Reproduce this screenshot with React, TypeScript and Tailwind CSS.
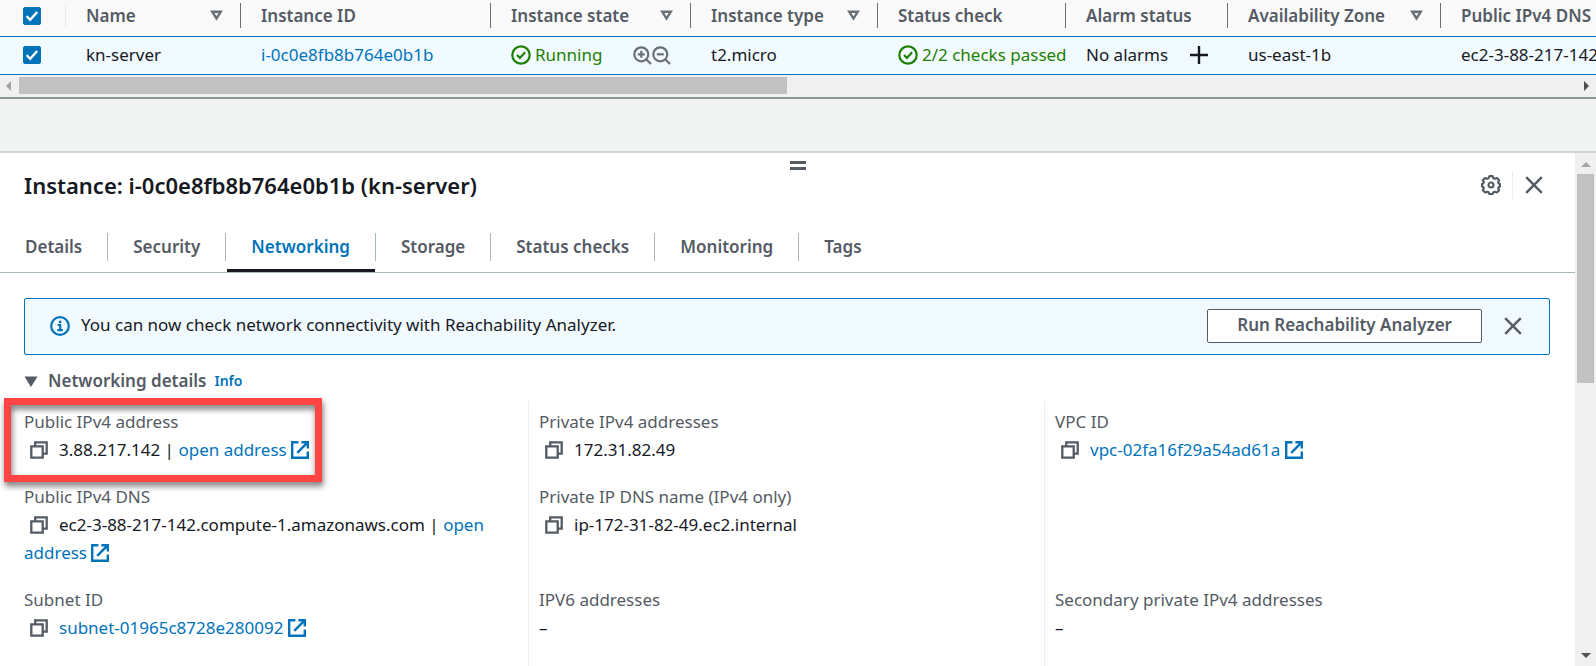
import type { ReactNode } from "react";

function CheckCircle() {
  return (
    <svg viewBox="0 0 20 20" className="size-5 shrink-0" fill="none" stroke="currentColor" strokeWidth="2.2">
      <circle cx="10" cy="10" r="8.7" />
      <path d="M6 10 8.900 12.900 14.100 7.300" />
    </svg>
  );
}

function ZoomGlyph({ plus }: { plus?: boolean }) {
  return (
    <svg viewBox="0 0 19 19" className="size-[19px]" fill="none" stroke="currentColor" strokeWidth="2.2">
      <circle cx="8.300" cy="8.300" r="7" />
      <path d="M13.200 13.200 18 18" />
      <path d={plus ? "M4.800 8.300h7M8.300 4.800v7" : "M4.800 8.300h7"} />
    </svg>
  );
}

function SortIcon() {
  return (
    <svg viewBox="0 0 13 11" className="h-[11px] w-[13px]" fill="none" stroke="currentColor" strokeWidth="2.4">
      <path d="M2.200 1.700h8.600L6.500 8.600z" />
    </svg>
  );
}

function CopyIcon() {
  return (
    <svg viewBox="0 0 18 18" className="size-[18px]" fill="none" stroke="currentColor" strokeWidth="2.3">
      <path d="M1.300 5.300h11.400v11.400H1.300z" />
      <path d="M5.200 5V1.300h11.500v11.400H13" />
    </svg>
  );
}

function ExternalIcon() {
  return (
    <svg viewBox="0 0 18 18" className="inline-block size-[18px] align-[-3px]" fill="none" stroke="currentColor" strokeWidth="2.4">
      <path d="M7.400 1.200H1.200v15.600h15.600v-6.200" />
      <path d="M10.400 1.200h6.400v6.400M16.400 1.600 6.200 11.800" />
    </svg>
  );
}

function CloseIcon() {
  return (
    <svg viewBox="0 0 18 18" className="size-[18px]" fill="none" stroke="currentColor" strokeWidth="2.4">
      <path d="M1.200 1.200 16.800 16.800M16.800 1.200 1.200 16.800" />
    </svg>
  );
}

function GearIcon() {
  return (
    <svg viewBox="0 0 20 20" className="size-5" fill="none" stroke="currentColor" strokeWidth="2.200" strokeLinejoin="round">
      <circle cx="10" cy="10" r="2.500" />
      <path d="M8.400 1.200h3.200l.8 2 1.500.6 2-.8 2.200 2.200-.9 2 .6 1.400 1.200.5v2.300l-1.200.5-.6 1.400.9 2-2.200 2.200-2-.8-1.500.6-.8 1.700H8.400l-.8-1.700-1.500-.6-2 .8L1.900 15.300l.9-2-.6-1.400L1 11.400V9.100l1.200-.5.6-1.400-.9-2L4.100 3l2 .8 1.500-.6z" />
    </svg>
  );
}

function Tick({ label }: { label: string }) {
  return (
    <label className="ml-[23px] grid size-[18px] place-items-center text-white">
      <input
        type="checkbox"
        defaultChecked
        aria-label={label}
        className="peer col-start-1 row-start-1 size-[18px] appearance-none rounded-xs border border-[#879596] bg-white checked:border-[#0073bb] checked:bg-[#0073bb]"
      />
      <svg viewBox="0 0 18 18" className="pointer-events-none col-start-1 row-start-1 hidden size-[18px] peer-checked:block" fill="none" stroke="currentColor" strokeWidth="2.4">
        <path d="M3.600 9.200 7.200 12.800 14.200 5" />
      </svg>
    </label>
  );
}

const columns = [
  { title: "Name", sort: true, width: "w-[175px]" },
  { title: "Instance ID", sort: false, width: "w-[250px]" },
  { title: "Instance state", sort: true, width: "w-[200px]" },
  { title: "Instance type", sort: true, width: "w-[187px]" },
  { title: "Status check", sort: false, width: "w-[188px]" },
  { title: "Alarm status", sort: false, width: "w-[162px]" },
  { title: "Availability Zone", sort: true, width: "w-[213px]" },
  { title: "Public IPv4 DNS", sort: false, width: "" },
];

function InstanceTable() {
  return (
    <table className="w-full table-fixed border-collapse whitespace-nowrap">
      <thead>
        <tr className="h-[36px] border-b border-[#0073bb] bg-[#fafafa] align-top text-[#545b64]">
          <th className="w-[66px] p-0 pt-[3px]">
            <div className="flex h-[25px] items-center border-r border-[#eaeded]">
              <Tick label="Select all instances" />
            </div>
          </th>
          {columns.map((c, i) => (
            <th key={c.title} scope="col" className={`p-0 pt-[3px] text-left font-semibold ${c.width}`}>
              <div className={`flex h-[25px] items-center justify-between pr-[17px] pl-5 ${i < columns.length - 1 ? "border-r border-[#687078]" : ""}`}>
                {c.title}
                {c.sort && (
                  <button type="button" aria-label={`Sort by ${c.title}`} className="text-[#687078]">
                    <SortIcon />
                  </button>
                )}
              </div>
            </th>
          ))}
        </tr>
      </thead>
      <tbody>
        <tr className="h-[38px] border-b border-[#0073bb] bg-[#f1faff]">
          <td className="p-0">
            <Tick label="Select kn-server" />
          </td>
          <td className="p-0 pl-5">kn-server</td>
          <td className="p-0 pl-5">
            <a href="#instance" className="text-[#0073bb]">i-0c0e8fb8b764e0b1b</a>
          </td>
          <td className="p-0 pr-5 pl-5">
            <div className="flex items-center justify-between">
              <span className="flex items-center gap-1 text-[#1d8102]">
                <CheckCircle />
                Running
              </span>
              <span className="flex items-center text-[#687078]">
                <button type="button" aria-label="Filter by this state"><ZoomGlyph plus /></button>
                <button type="button" aria-label="Exclude this state"><ZoomGlyph /></button>
              </span>
            </div>
          </td>
          <td className="p-0 pl-5">t2.micro</td>
          <td className="overflow-hidden p-0 pl-5">
            <span className="flex items-center gap-1 text-[#1d8102]">
              <CheckCircle />
              2/2 checks passed
            </span>
          </td>
          <td className="p-0 pr-5 pl-5">
            <div className="flex items-center justify-between">
              No alarms
              <button type="button" aria-label="Add alarm">
                <svg viewBox="0 0 18 18" className="size-[18px]" fill="none" stroke="currentColor" strokeWidth="2.4">
                  <path d="M0 9h18M9 0v18" />
                </svg>
              </button>
            </div>
          </td>
          <td className="p-0 pl-5">us-east-1b</td>
          <td className="overflow-hidden p-0 pl-5">ec2-3-88-217-142.compute-1.amazonaws.com</td>
        </tr>
      </tbody>
    </table>
  );
}

function HorizontalScrollbar() {
  return (
    <div className="flex h-[24px] shrink-0 items-center border-b-2 border-[#879596] bg-[#f0f0f0]">
      <svg viewBox="0 0 19 10" className="h-[10px] w-[19px] text-[#a3a3a3]" fill="currentColor">
        <path d="M11 0v10L6 5z" />
      </svg>
      <div className="flex flex-1">
        <div className="h-[17px] w-[49.3%] bg-[#c1c1c1]" />
      </div>
      <svg viewBox="0 0 19 10" className="h-[10px] w-[19px] text-[#505050]" fill="currentColor">
        <path d="M7 0v10l5-5z" />
      </svg>
    </div>
  );
}

const tabs = ["Details", "Security", "Networking", "Storage", "Status checks", "Monitoring", "Tags"];

function Tabs() {
  return (
    <div role="tablist" className="flex h-[48px] border-b border-[#aab7b8] font-semibold text-[#545b64]">
      {tabs.map((t, i) => (
        <div key={t} className="relative">
          <button
            type="button"
            role="tab"
            aria-selected={t === "Networking"}
            className={`mt-2 flex h-7 items-center px-[25px] ${i < tabs.length - 1 ? "border-r border-[#aab7b8]" : ""} ${t === "Networking" ? "text-[#0073bb]" : ""}`}
          >
            {t}
          </button>
          {t === "Networking" && <div className="absolute right-px bottom-0 left-px h-[3px] bg-[#16191f]" />}
        </div>
      ))}
    </div>
  );
}

function Field({ label, copy, children }: { label: string; copy?: boolean; children: ReactNode }) {
  return (
    <div className="leading-7">
      <dt className="text-[#545b64]">{label}</dt>
      <dd>
        {copy && (
          <button type="button" aria-label={`Copy ${label}`} className="mr-[11px] ml-[6px] align-[-3px] text-[#545b64]">
            <CopyIcon />
          </button>
        )}
        {children}
      </dd>
    </div>
  );
}

function Ext({ children }: { children: ReactNode }) {
  return (
    <a href="#open" className="text-[#0073bb]">
      {children} <ExternalIcon />
    </a>
  );
}

function NetworkingDetails() {
  return (
    <dl className="grid grid-cols-3 pr-[15px] pl-3">
      <div className="relative row-span-4 grid grid-rows-subgrid gap-y-[19px] pt-[7px] pr-5 pl-3">
        <Field label="Public IPv4 address" copy>
          3.88.217.142 | <Ext>open address</Ext>
        </Field>
        <Field label="Public IPv4 DNS" copy>
          ec2-3-88-217-142.compute-1.amazonaws.com | <Ext>open address</Ext>
        </Field>
        <Field label="Subnet ID" copy>
          <Ext>subnet-01965c8728e280092</Ext>
        </Field>
        <div className="h-10" />
        <div className="pointer-events-none absolute -top-[3px] -left-2 h-[84px] w-[318px] border-[7px] border-[#ff4444] drop-shadow-[1px_4px_3px_rgba(0,0,0,0.55)]" />
      </div>
      <div className="row-span-4 grid grid-rows-subgrid gap-y-[19px] border-l border-[#eaeded] pt-[7px] pr-5 pl-[10px]">
        <Field label="Private IPv4 addresses" copy>172.31.82.49</Field>
        <Field label="Private IP DNS name (IPv4 only)" copy>ip-172-31-82-49.ec2.internal</Field>
        <Field label="IPV6 addresses">–</Field>
      </div>
      <div className="row-span-4 grid grid-rows-subgrid gap-y-[19px] border-l border-[#eaeded] pt-[7px] pr-5 pl-[10px]">
        <Field label="VPC ID" copy>
          <Ext>vpc-02fa16f29a54ad61a</Ext>
        </Field>
        <div />
        <Field label="Secondary private IPv4 addresses">–</Field>
      </div>
    </dl>
  );
}

function VerticalScrollbar() {
  return (
    <div className="flex w-[21px] shrink-0 flex-col items-center bg-[#f0f0f0]">
      <svg viewBox="0 0 10 21" className="h-[21px] w-[10px] text-[#a3a3a3]" fill="currentColor">
        <path d="M0 14h10L5 9z" />
      </svg>
      <div className="flex w-[17px] flex-1">
        <div className="h-[44.5%] w-full bg-[#c1c1c1]" />
      </div>
      <svg viewBox="0 0 10 21" className="h-[21px] w-[10px] text-[#505050]" fill="currentColor">
        <path d="M0 8h10l-5 5z" />
      </svg>
    </div>
  );
}

export default function App() {
  return (
    <div className="flex h-screen flex-col overflow-hidden bg-[#f2f3f3] font-['Noto_Sans','Open_Sans',sans-serif] text-[17px] leading-6 text-[#16191f]">
      <InstanceTable />
      <HorizontalScrollbar />
      <div className="h-[52px] shrink-0" />
      <section className="flex min-h-0 flex-1 border-t-2 border-[#d0d5d6] bg-white">
        <div className="min-w-0 flex-1 overflow-hidden">
          <div className="flex h-[17px] items-end justify-center pl-5">
            <button type="button" aria-label="Resize panel" className="h-[9px] w-4 border-y-3 border-[#545b64]" />
          </div>
          <header className="flex h-[31px] items-center justify-between pr-8 pl-6">
            <h2 className="text-[22px] leading-8 font-semibold">Instance: i-0c0e8fb8b764e0b1b (kn-server)</h2>
            <div className="flex items-center text-[#545b64]">
              <button type="button" aria-label="Preferences"><GearIcon /></button>
              <div className="mr-3 ml-[11px] h-7 w-px bg-[#eaeded]" />
              <button type="button" aria-label="Close panel"><CloseIcon /></button>
            </div>
          </header>
          <div className="pt-6">
            <Tabs />
          </div>
          <div className="mr-[25px] mt-[25px] ml-6 flex h-[57px] items-center rounded-xs border border-[#0073bb] bg-[#f1faff] pr-[27px] pl-[25px]">
            <svg viewBox="0 0 20 20" className="mr-[11px] size-5 text-[#0073bb]" fill="none" stroke="currentColor" strokeWidth="2.2">
              <circle cx="10" cy="10" r="8.800" />
              <path d="M7.600 9h2.600v5M7.200 14.200h5.600" />
              <path d="M8.900 5.900h2.400" strokeWidth="2.400" />
            </svg>
            <p className="flex-1 pb-0.5">You can now check network connectivity with Reachability Analyzer.</p>
            <button type="button" className="mr-[22px] h-[34px] rounded-xs border border-[#545b64] bg-white px-[29px] pb-0.5 font-semibold text-[#545b64]">
              Run Reachability Analyzer
            </button>
            <button type="button" aria-label="Dismiss" className="text-[#545b64]"><CloseIcon /></button>
          </div>
          <div className="flex h-[46px] items-center pt-[7px] pl-6">
            <h3>
              <button type="button" className="flex items-center gap-[10px] font-semibold text-[#545b64]">
                <svg viewBox="0 0 14 11" className="h-[11px] w-[14px]" fill="currentColor">
                  <path d="M.5.500h13L7 11z" />
                </svg>
                Networking details
              </button>
            </h3>
            <a href="#info" className="ml-2 text-sm font-semibold text-[#0073bb]">Info</a>
          </div>
          <NetworkingDetails />
        </div>
        <VerticalScrollbar />
      </section>
    </div>
  );
}
